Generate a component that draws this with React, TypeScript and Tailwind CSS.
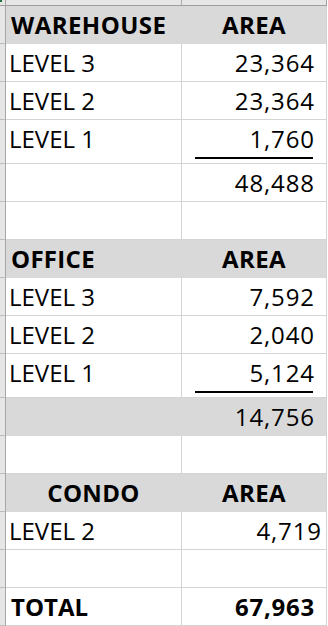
import React from "react";

type Row = {
  a?: string;
  b?: string;
  head?: boolean;
  fill?: boolean;
  bold?: boolean;
  center?: boolean;
  underline?: boolean;
  bCls?: string;
  aCls?: string;
};

const rows: Row[] = [
  { a: "WAREHOUSE", b: "AREA", head: true, fill: true, aCls: "tracking-[0.45px]" },
  { a: "LEVEL 3", b: "23,364" },
  { a: "LEVEL 2", b: "23,364" },
  { a: "LEVEL 1", b: "1,760", underline: true },
  { b: "48,488" },
  {},
  { a: "OFFICE", b: "AREA", head: true, fill: true, aCls: "tracking-[0.3px]" },
  { a: "LEVEL 3", b: "7,592" },
  { a: "LEVEL 2", b: "2,040" },
  { a: "LEVEL 1", b: "5,124", underline: true },
  { b: "14,756", fill: true },
  {},
  { a: "CONDO", b: "AREA", head: true, fill: true, center: true, aCls: "tracking-[0.3px]" },
  { a: "LEVEL 2", b: "4,719", bCls: "pr-[4px]" },
  {},
  { a: "TOTAL", b: "67,963", bold: true },
];

function ACell({ r }: { r: Row }) {
  const bold = r.head || r.bold;
  return (
    <div
      className={
        "w-[176px] border-r border-b flex flex-col " +
        (r.fill ? "bg-[#d9d9d9] border-r-[#d9d9d9] border-b-[#d9d9d9]" : "bg-white border-[#d4d4d4]")
      }
    >
      <div
        className={
          "h-[37px] leading-[37px] whitespace-nowrap " +
          (bold ? "font-bold " : "font-normal ") +
          (r.center ? "text-center " : bold ? "pl-[5px] " : "pl-[3px] ") +
          (r.aCls ?? "")
        }
      >
        {r.a ?? ""}
      </div>
      {r.underline && <div className="h-[6px]" />}
    </div>
  );
}

function BCell({ r }: { r: Row }) {
  const bold = r.head || r.bold;
  const isNum = !r.head;
  return (
    <div
      className={
        "w-[145px] border-r border-b flex flex-col " +
        (r.fill ? "bg-[#d9d9d9] border-b-[#d9d9d9] border-r-[#d4d4d4]" : "bg-white border-[#d4d4d4]")
      }
    >
      <div
        className={
          "h-[37px] leading-[37px] whitespace-nowrap " +
          (bold ? "font-bold " : "font-normal ") +
          (r.head
            ? "text-center tracking-[0.4px] "
            : "text-right " + (r.bCls ?? "pr-[11px]") + " ") +
          (isNum ? (bold ? "tracking-[0.75px]" : "tracking-[0.9px]") : "")
        }
      >
        {r.b ?? ""}
      </div>
      {r.underline && (
        <div className="h-[6px] flex flex-col">
          <div className="h-[2px] bg-black ml-[13px] mr-[13px]" />
        </div>
      )}
    </div>
  );
}

function RowHeader({ first }: { first?: boolean }) {
  return (
    <div
      className={
        "w-[6px] bg-[#e6e6e6] border-r border-r-[#a6a6a6] border-b border-b-[#bdbdbd] " +
        (first ? "" : "")
      }
    />
  );
}

export default function App() {
  return (
    <div className="w-[328px] h-[626px] bg-white overflow-hidden text-black text-[24px] font-['Open_Sans',sans-serif] flex flex-col">
      <div className="flex h-[6px] shrink-0">
        <div className="w-[6px] bg-[#e6e6e6] border-r border-b border-r-[#a6a6a6] border-b-[#9e9e9e] relative">
          <div className="absolute left-0 top-0 w-[2px] h-[2px] bg-[#217346]" />
        </div>
        <div className="w-[176px] bg-[#e6e6e6] border-r border-b border-r-[#ababab] border-b-[#9e9e9e]" />
        <div className="w-[145px] bg-[#e6e6e6] border-r border-b border-r-[#9e9e9e] border-b-[#9e9e9e]" />
        <div className="w-[1px] bg-white" />
      </div>
      {rows.map((r, i) => (
        <div key={i} className="flex shrink-0">
          <RowHeader />
          <ACell r={r} />
          <BCell r={r} />
          <div className="w-[1px] bg-white" />
        </div>
      ))}
    </div>
  );
}
